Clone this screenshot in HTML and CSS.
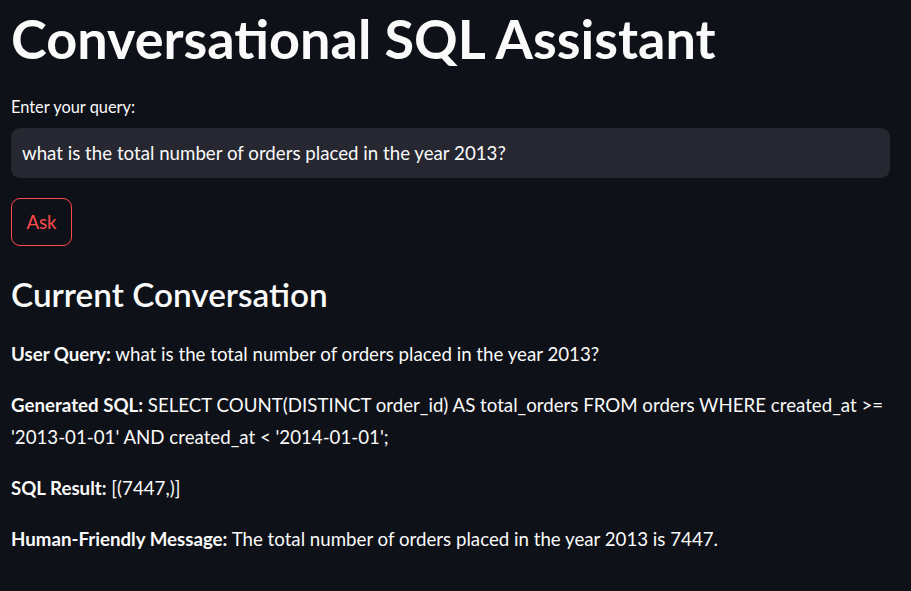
FILE: index.html
```html
<!DOCTYPE html>
<html lang="en">
<head>
<meta charset="utf-8">
<title>Conversational SQL Assistant</title>
<link rel="stylesheet" href="styles.css">
</head>
<body>
<main class="app">
  <h1 class="title">Conversational SQL Assistant</h1>
  <label class="field-label" for="q">Enter your query:</label>
  <div class="input-box">
    <input id="q" class="text-input" type="text" value="what is the total number of orders placed in the year 2013?">
  </div>
  <div class="btn-row">
    <button class="ask-btn" type="button">Ask</button>
  </div>
  <h3 class="section-title">Current Conversation</h3>
  <p class="msg"><strong>User Query:</strong> what is the total number of orders placed in the year 2013?</p>
  <p class="msg"><strong>Generated SQL:</strong> SELECT COUNT(DISTINCT order_id) AS total_orders FROM orders WHERE created_at &gt;= '2013-01-01' AND created_at &lt; '2014-01-01';</p>
  <p class="msg"><strong>SQL Result:</strong> [(7447,)]</p>
  <p class="msg"><strong>Human-Friendly Message:</strong> The total number of orders placed in the year 2013 is 7447.</p>
</main>
</body>
</html>
```

FILE: styles.css
```css
* { box-sizing: border-box; }
html, body {
  margin: 0;
  padding: 0;
  background: #0e1117;
  color: #fafafa;
  font-family: "Lato", "Noto Sans", sans-serif;
}
.app {
  display: flex;
  flex-direction: column;
  align-items: flex-start;
  padding: 6px 21px 0 11px;
  width: 911px;
}
.title {
  margin: 0;
  font-size: 54px;
  line-height: 66px;
  font-weight: 700;
  letter-spacing: 0;
}
.field-label {
  margin-top: 21px;
  font-size: 16.4px;
  line-height: 28px;
}
.input-box {
  margin-top: 7px;
  width: 100%;
  height: 50px;
  background: #262730;
  border-radius: 9px;
  display: flex;
  align-items: center;
}
.text-input {
  width: 100%;
  height: 100%;
  border: none;
  outline: none;
  background: transparent;
  color: #fafafa;
  font-family: inherit;
  font-size: 18.7px;
  padding: 0 11px;
}
.btn-row { margin-top: 20px; }
.ask-btn {
  height: 48px;
  width: 61px;
  border: 1px solid #ff4b4b;
  border-radius: 9px;
  background: transparent;
  color: #ff4b4b;
  font-family: inherit;
  font-size: 18.7px;
  padding: 0;
}
.section-title {
  margin: 27px 0 0;
  font-size: 33.3px;
  line-height: 42px;
  font-weight: 600;
}
.msg {
  margin: 0;
  font-size: 18.7px;
  line-height: 32px;
}
.section-title + .msg { margin-top: 23px; }
.msg + .msg { margin-top: 19px; }
```
